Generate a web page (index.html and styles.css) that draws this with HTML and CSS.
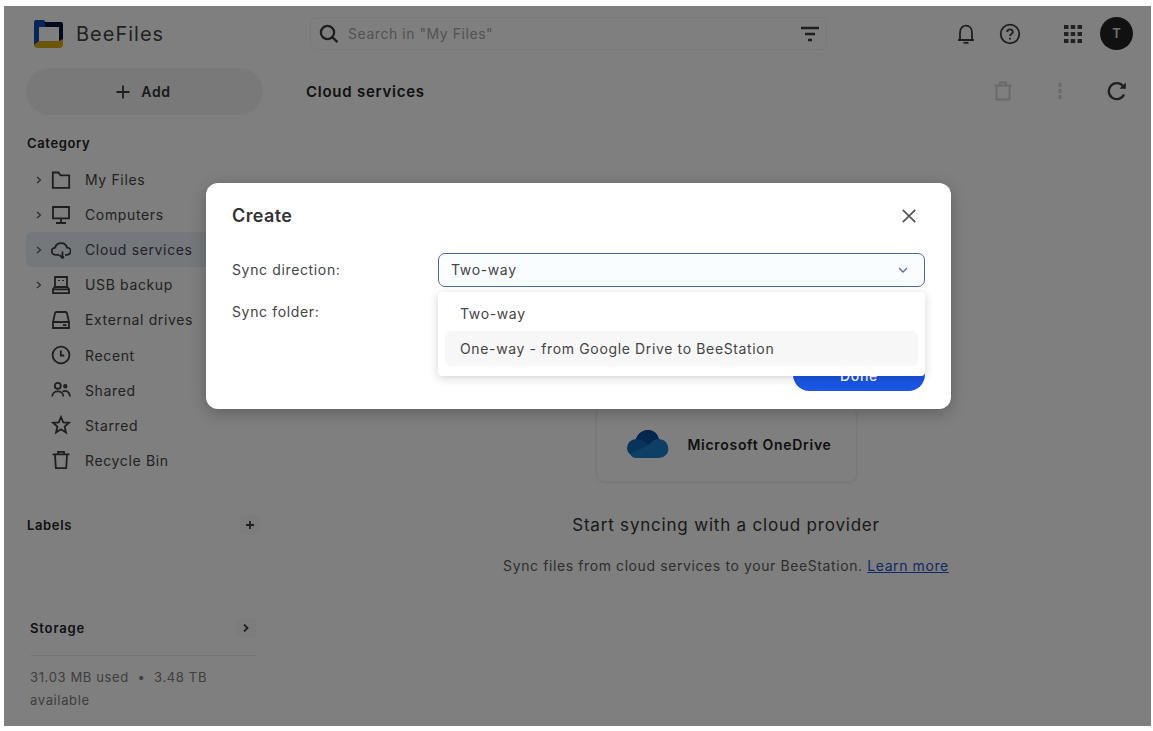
FILE: index.html
```html
<!DOCTYPE html>
<html lang="en">
  <head>
    <meta charset="UTF-8" />
    <meta name="viewport" content="width=device-width, initial-scale=1.0" />
    <title>BeeFiles</title>
    <link rel="stylesheet" href="styles.css">
  </head>
  <body>
    <div class="window">
      <aside class="sidebar">
        <div class="brand">
          <svg class="logo" width="30" height="28" viewBox="0 0 30 28">
            <path fill="#0a4fae" d="M1 0h9l2 3v4H5v15L0 25V2z" />
            <path fill="#06123f" d="M10 2h17q2 0 2 2v17l-4 2V7H12z" />
            <path fill="#d9ad14" d="M5 21h20l4-2v5q0 4-4 4H4q-4 0-4-3z" />
          </svg>
          <span class="brand-name">BeeFiles</span>
        </div>
        <button class="add-button">
          <svg class="icon" width="14" height="14" viewBox="0 0 14 14"><path d="M7 .5v13M.5 7h13" /></svg>
          <span>Add</span>
        </button>
        <h2 class="side-title category-title">Category</h2>
        <ul class="category">
          <li>
            <svg class="chevron" width="6" height="8" viewBox="0 0 6 8"><path d="M1 1l3.5 3L1 7" /></svg>
            <svg class="icon" width="20" height="20" viewBox="0 0 20 20"><path d="M1.800 2.500h5.700l2 2.800h8.700v12.500H1.800z" /></svg>
            <span>My Files</span>
          </li>
          <li>
            <svg class="chevron" width="6" height="8" viewBox="0 0 6 8"><path d="M1 1l3.500 3L1 7" /></svg>
            <svg class="icon" width="20" height="20" viewBox="0 0 20 20"><path d="M2 2h16v11.400H2zM10 13.200v4.500M5 18h10" /></svg>
            <span>Computers</span>
          </li>
          <li class="active">
            <svg class="chevron" width="6" height="8" viewBox="0 0 6 8"><path d="M1 1l3.500 3L1 7" /></svg>
            <svg class="icon" width="20" height="20" viewBox="0 0 20 20"><path d="M8 14.800H4.500a3.600 3.600 0 0 1-.4-7.200 6.200 6.200 0 0 1 11.900 0 3.600 3.600 0 0 1 .2 7.200H14M11.500 11.500V18M8.500 15l3 3 1.500-1.500" /></svg>
            <span>Cloud services</span>
          </li>
          <li>
            <svg class="chevron" width="6" height="8" viewBox="0 0 6 8"><path d="M1 1l3.500 3L1 7" /></svg>
            <svg class="icon" width="20" height="20" viewBox="0 0 20 20"><path d="M4 2h12v10H4zM4 11.500L2 14v4.200h16V14l-2-2.500M2 14.300h16M8 5v1M12 5v1" /></svg>
            <span>USB backup</span>
          </li>
          <li>
            <i class="chevron"></i>
            <svg class="icon" width="20" height="20" viewBox="0 0 20 20"><path d="M2 12L4 3.200Q4.300 2 5.500 2h9q1.200 0 1.500 1.200L18 12v6H2zM2 12h16M12 15.200h3.500" /></svg>
            <span>External drives</span>
          </li>
          <li>
            <i class="chevron"></i>
            <svg class="icon" width="20" height="20" viewBox="0 0 20 20"><circle cx="10" cy="10" r="8.400" /><path d="M9.800 5.500v5h3.400" /></svg>
            <span>Recent</span>
          </li>
          <li>
            <i class="chevron"></i>
            <svg class="icon" width="20" height="20" viewBox="0 0 20 20"><circle cx="6.800" cy="5.800" r="3" /><circle cx="14.300" cy="6.300" r="1.300" /><path d="M1.300 16.500c0-6.800 11-6.800 11 0M11.500 11.500c3.500-1.800 7.200.300 7.500 5" /></svg>
            <span>Shared</span>
          </li>
          <li>
            <i class="chevron"></i>
            <svg class="icon" width="20" height="20" viewBox="0 0 20 20"><path d="M10 2l2.200 5.400 5.800.4-4.400 3.800 1.400 5.900-5-3.200-5 3.200 1.400-5.900L2 7.800l5.800-.4z" /></svg>
            <span>Starred</span>
          </li>
          <li>
            <i class="chevron"></i>
            <svg class="icon" width="20" height="20" viewBox="0 0 20 20"><path d="M1.500 4.400h17M4 4.400l.8 13.800h10.400L16 4.400M7 4V1.800h6V4" /></svg>
            <span>Recycle Bin</span>
          </li>
        </ul>
        <div class="side-row labels">
          <h2 class="side-title">Labels</h2>
          <button class="mini-button"><svg class="icon" width="8" height="8" viewBox="0 0 8 8"><path d="M4 0v8M0 4h8" /></svg></button>
        </div>
        <div class="storage">
          <div class="side-row">
            <h2 class="side-title">Storage</h2>
            <button class="mini-button"><svg class="icon" width="8" height="8" viewBox="0 0 8 8"><path d="M2 .5L5.500 4 2 7.500" /></svg></button>
          </div>
          <p class="usage">31.03 MB used &nbsp;•&nbsp; 3.48 TB<br>available</p>
        </div>
      </aside>

      <main class="main">
        <header class="topbar">
          <div class="search">
            <svg class="icon bold" width="20" height="20" viewBox="0 0 20 20"><circle cx="8.500" cy="8.500" r="6.600" /><path d="M13.200 13.200l5.300 5" /></svg>
            <span class="placeholder">Search in "My Files"</span>
            <svg class="icon bold" width="18" height="16" viewBox="0 0 18 16"><path d="M0 2h18M4 8h10M7 14h4" /></svg>
          </div>
          <div class="top-icons">
            <svg class="icon" width="20" height="22" viewBox="0 0 20 22"><path d="M2 17h16M4 17V9.500C4 .2 16 .2 16 9.500V17" /><path d="M7.500 19.800h5" /></svg>
            <svg class="icon help" width="22" height="22" viewBox="0 0 22 22"><circle cx="11" cy="11" r="9.300" /><path d="M8.200 9c0-3.600 5.600-3.600 5.600 0 0 2-2.800 1.900-2.800 4M11 14.700v1.800" /></svg>
            <svg class="apps" width="18" height="18" viewBox="0 0 18 18"><path d="M0 0h4.500v4H0zM6.700 0h4.500v4H6.700zM13.500 0H18v4h-4.500zM0 7h4.500v4H0zM6.700 7h4.500v4H6.700zM13.500 7H18v4h-4.500zM0 14h4.500v4H0zM6.700 14h4.500v4H6.700zM13.500 14H18v4h-4.500z" /></svg>
            <div class="avatar">T</div>
          </div>
        </header>
        <div class="toolbar">
          <h1>Cloud services</h1>
          <div class="tools">
            <svg class="icon disabled" width="20" height="20" viewBox="0 0 20 20"><path d="M1.500 4.500h17M3.500 4.500V18.500h13V4.500M7 4V1.500h6V4" /></svg>
            <svg class="icon disabled dots" width="4" height="18" viewBox="0 0 4 18"><path d="M2 1v4M2 7v4M2 13v4" /></svg>
            <svg class="icon bold" width="20" height="20" viewBox="0 0 20 20"><path d="M17 13.500a8 8 0 1 1-.5-7.600" /><path d="M18.800 1.500v6.300h-6.300z" class="arrow" /></svg>
          </div>
        </div>
        <section class="providers">
          <div class="provider-card">
            <svg width="42" height="28" viewBox="0 0 42 28">
              <path fill="#1268b4" d="M0 19q0-9 9-10C13-2 28-4 32 9l2 6-24 11q-9 0-10-7z" />
              <path fill="#0a4c9c" d="M9 9C13-2 28-4 32 9l-10 6-6-4q-3-2-7-2z" />
              <path fill="#1d80cc" d="M3 24l19-9q4-6 10-6c12 1 13 18 0 19H9q-4 0-6-4z" />
            </svg>
            <span>Microsoft OneDrive</span>
          </div>
          <h2 class="empty-title">Start syncing with a cloud provider</h2>
          <p class="empty-text">Sync files from cloud services to your BeeStation. <a href="#">Learn more</a></p>
        </section>
      </main>

      <div class="overlay">
        <div class="modal">
          <div class="modal-header">
            <h2>Create</h2>
            <svg class="close" width="14" height="14" viewBox="0 0 14 14"><path d="M.800.800l12.400 12.400M13.200.800L.800 13.200" /></svg>
          </div>
          <div class="form-row">
            <label>Sync direction:</label>
            <div class="select">
              <span>Two-way</span>
              <svg width="10" height="8" viewBox="0 0 10 8"><path d="M1 2l4 4 4-4" /></svg>
              <ul class="dropdown">
                <li>Two-way</li>
                <li class="hover">One-way - from Google Drive to BeeStation</li>
              </ul>
            </div>
          </div>
          <div class="form-row folder">
            <label>Sync folder:</label>
          </div>
          <div class="modal-footer">
            <button class="done">Done</button>
          </div>
        </div>
      </div>
    </div>
  </body>
</html>
```
FILE: styles.css
```css
* {
  margin: 0;
  padding: 0;
  box-sizing: border-box;
}
body {
  background: #fff;
  font-family: Inter, "Liberation Sans", sans-serif;
  font-size: 14px;
  letter-spacing: 0.64px;
  color: #444;
}
ul {
  list-style: none;
}
button {
  border: none;
  font-family: inherit;
  letter-spacing: inherit;
  cursor: pointer;
}
.window {
  position: relative;
  display: flex;
  width: 1147px;
  height: 720px;
  margin: 6px 0 0 4px;
  overflow: hidden;
}
.icon {
  fill: none;
  stroke: #3c3c3c;
  stroke-width: 1.8;
  flex: none;
}
.icon.bold {
  stroke-width: 2.3;
}

/* sidebar */
.sidebar {
  width: 297px;
  padding: 14px 0 0 22px;
}
.brand {
  display: flex;
  align-items: center;
  height: 28px;
  padding-left: 8px;
}
.brand-name {
  margin-left: 12px;
  font-size: 20px;
  letter-spacing: 1px;
}
.add-button {
  display: flex;
  justify-content: center;
  align-items: center;
  gap: 11px;
  width: 237px;
  height: 47px;
  margin-top: 20px;
  padding-right: 2px;
  border-radius: 24px;
  background: #f3f3f3;
  color: #333;
  font-size: 14px;
  font-weight: 600;
}
.side-title {
  font-size: 13px;
  font-weight: 600;
  line-height: 20px;
  color: #222;
}
.category-title {
  margin: 18px 0 9px 1px;
}
.category li {
  display: flex;
  align-items: center;
  width: 238px;
  height: 35.1px;
  padding-left: 10px;
  border-radius: 6px;
  white-space: nowrap;
}
.category .active {
  background: #e8f0fa;
}
.category span {
  margin-left: 14px;
}
.chevron {
  width: 6px;
  height: 8px;
  margin-right: 9px;
  fill: none;
  stroke: #555;
  stroke-width: 1.2;
}
.side-row {
  display: flex;
  justify-content: space-between;
  align-items: center;
}
.labels {
  width: 233px;
  margin: 37px 0 0 1px;
}
.mini-button {
  display: flex;
  justify-content: center;
  align-items: center;
  width: 20px;
  height: 20px;
  border-radius: 5px;
  background: #f8f8f8;
}
.storage {
  width: 226px;
  margin: 83px 0 0 4px;
}
.storage .side-title {
  letter-spacing: 0.85px;
}
.usage {
  margin-top: 17px;
  padding-top: 10px;
  border-top: 1px solid #eee;
  font-size: 13px;
  line-height: 23px;
  color: #7c7c7c;
}

/* main */
.main {
  flex: 1;
}
.topbar {
  display: flex;
  justify-content: space-between;
  padding: 11px 18px 0 9px;
}
.search {
  display: flex;
  align-items: center;
  width: 517px;
  height: 33px;
  padding: 0 7px 0 8px;
  border: 1px solid #f2f2f2;
  border-radius: 6px;
}
.placeholder {
  flex: 1;
  margin-left: 9px;
  letter-spacing: 0.55px;
  color: #a5a5a5;
}
.top-icons {
  display: flex;
  align-items: center;
}
.help {
  margin: 0 43px 0 23px;
}
.apps {
  fill: #444;
}
.avatar {
  width: 33px;
  height: 33px;
  margin-left: 18px;
  border-radius: 50%;
  background: #222;
  color: #e4e4e4;
  font-size: 13px;
  font-weight: 600;
  line-height: 33px;
  letter-spacing: 0;
  text-align: center;
}
.toolbar {
  display: flex;
  justify-content: space-between;
  align-items: center;
  height: 24px;
  margin-top: 29px;
  padding: 0 24px 0 5px;
}
.toolbar h1 {
  font-size: 15px;
  font-weight: 600;
  letter-spacing: 0.75px;
  color: #222;
}
.tools {
  display: flex;
  align-items: center;
}
.icon.disabled {
  stroke: #d2d2d2;
}
.dots {
  margin: 0 45px 0 45px;
  stroke-width: 3;
}
.arrow {
  fill: #3c3c3c;
  stroke: none;
}
.providers {
  display: flex;
  flex-direction: column;
  align-items: center;
  padding-top: 303px;
}
.provider-card {
  display: flex;
  align-items: center;
  gap: 19px;
  width: 261px;
  height: 76px;
  padding-left: 30px;
  border: 1px solid #f0f0f0;
  border-radius: 8px;
  box-shadow: 0 1px 3px rgba(0, 0, 0, 0.08);
  color: #222;
  font-weight: 600;
  letter-spacing: 0.7px;
  white-space: nowrap;
}
.empty-title {
  margin-top: 31px;
  font-size: 17px;
  font-weight: 400;
  letter-spacing: 0.8px;
  line-height: 24px;
  color: #333;
}
.empty-text {
  margin-top: 19px;
  letter-spacing: 0.6px;
  line-height: 20px;
  color: #5c5c5c;
}
.empty-text a {
  color: #2255cc;
}

/* modal */
.overlay {
  position: absolute;
  top: 0;
  left: 0;
  width: 100%;
  height: 100%;
  background: rgba(0, 0, 0, 0.5);
}
.modal {
  display: flex;
  flex-direction: column;
  width: 745px;
  height: 226px;
  margin: 177px 0 0 202px;
  padding: 20px 26px 18px;
  border-radius: 12px;
  background: #fff;
  box-shadow: 0 4px 16px rgba(0, 0, 0, 0.25);
}
.modal-header {
  display: flex;
  justify-content: space-between;
  align-items: center;
  height: 25px;
  padding-right: 9px;
}
.modal-header h2 {
  font-size: 18px;
  font-weight: 600;
  letter-spacing: 0.4px;
  color: #333;
}
.close {
  fill: none;
  stroke: #555;
  stroke-width: 1.7;
}
.form-row {
  display: flex;
  align-items: center;
  height: 34px;
  margin-top: 25px;
}
.form-row label {
  width: 206px;
  padding-bottom: 2px;
}
.folder {
  margin-top: 8px;
}
.select {
  position: relative;
  display: flex;
  flex: 1;
  justify-content: space-between;
  align-items: center;
  height: 34px;
  padding: 0 16px 1px 12px;
  border: 1.5px solid #4a6a9c;
  border-radius: 7px;
  background: #fafdff;
}
.select svg {
  fill: none;
  stroke: #5670a8;
  stroke-width: 1.4;
}
.dropdown {
  position: absolute;
  top: 38px;
  left: -1px;
  width: 487px;
  height: 84px;
  padding: 4px 7px;
  border-radius: 4px;
  background: #fff;
  box-shadow: 0 2px 10px rgba(0, 0, 0, 0.18);
}
.dropdown li {
  height: 35px;
  padding-left: 15px;
  border-radius: 6px;
  line-height: 35px;
}
.dropdown .hover {
  background: #f7f7f7;
}
.modal-footer {
  display: flex;
  justify-content: flex-end;
  margin-top: auto;
}
.done {
  width: 132px;
  height: 33px;
  padding-top: 2px;
  border-radius: 17px;
  background: #1a55e3;
  color: #fff;
  font-size: 14px;
  font-weight: 500;
}
```
